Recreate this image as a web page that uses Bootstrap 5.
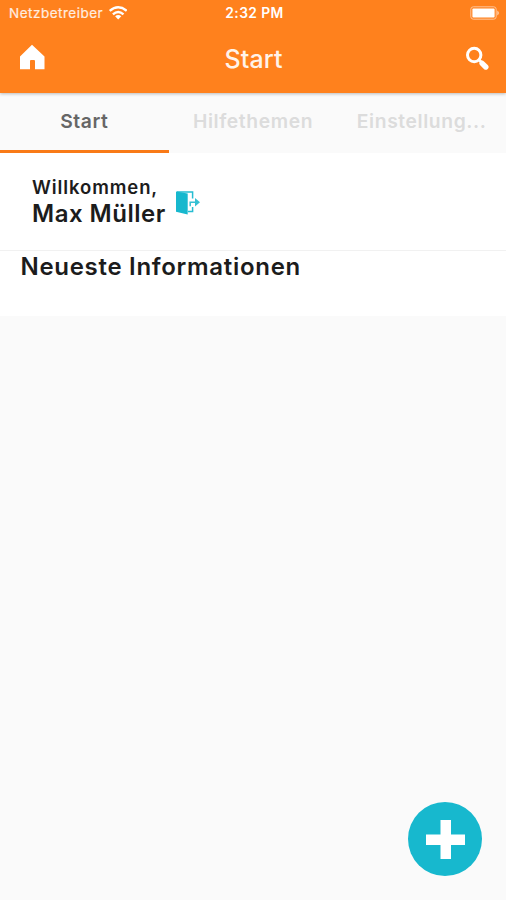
<!DOCTYPE html>
<html lang="de">
<head>
<meta charset="utf-8">
<meta name="viewport" content="width=device-width, initial-scale=1">
<title>Start</title>
<link href="https://cdn.jsdelivr.net/npm/bootstrap@5.3.0/dist/css/bootstrap.min.css" rel="stylesheet">
<style>
body{font-family:Inter,"Liberation Sans",sans-serif;background:#fafafa;color:#1c1c1c;height:900px;overflow:hidden}
svg{display:block}
.app-head{background:#ff811d;color:#fff;height:93px;box-shadow:0 1px 3px rgba(0,0,0,.25);z-index:1}
.status{height:26px;padding:0 6px 0 9px;font-size:13.5px;line-height:26px}
.status-time{font-weight:600;font-size:13.8px;letter-spacing:.4px}
.carrier{letter-spacing:.5px;color:#ffede0;-webkit-text-stroke:.2px #ffede0}
.title-bar{height:67px;padding:0 17px 3px 18px}
.title{font-size:25px;line-height:30px;padding-top:1px;font-weight:500;letter-spacing:.1px;color:#fff3ea}
.tabs{height:60px}
.tabs .nav-link{height:60px;padding:0;line-height:57px;font-size:19.3px;font-weight:600;letter-spacing:.6px;color:#dcdcdc;border-radius:0;border-bottom:3px solid transparent}
.tabs .nav-link.active{color:#666;border-bottom-color:#f97a17}
.welcome{height:98px;padding:22px 32px 0;border-bottom:1px solid #f1f1f1}
.greet{font-size:18.5px;line-height:25px;font-weight:600;letter-spacing:.9px}
.user{font-size:24px;line-height:28px;font-weight:600;letter-spacing:.5px}
.news{height:65px;padding:0 20.5px}
.news-title{font-size:24px;line-height:32px;font-weight:600;letter-spacing:.7px}
.fab{width:74px;height:74px;background:#17b8ce;right:24px;bottom:24px}
</style>
<script src="https://cdn.jsdelivr.net/npm/bootstrap@5.3.0/dist/js/bootstrap.bundle.min.js"></script>
</head>
<body class="d-flex flex-column">
<header class="app-head position-relative flex-shrink-0">
  <div class="status row g-0 align-items-center">
    <div class="col d-flex align-items-center">
      <span class="carrier">Netzbetreiber</span>
      <svg class="ms-1" width="20" height="15" viewBox="0 0 20 15" fill="none" stroke="#fff" stroke-width="2.4"><path d="M2.7 4.9Q11.2-2.2 19.7 4.9M5.9 8.3Q11.2 3.8 16.5 8.3"/><path d="M8.1 10.3Q11.2 7.9 14.3 10.3L11.2 13.6Z" fill="#fff" stroke="none"/></svg>
    </div>
    <div class="col-auto status-time">2:32 PM</div>
    <div class="col d-flex justify-content-end">
      <svg width="30" height="14" viewBox="0 0 30 14"><rect x=".8" y=".8" width="25.4" height="12.4" rx="2.5" fill="none" stroke="#ffc497"/><rect x="2.4" y="2.4" width="22.2" height="9.2" rx="1" fill="#fff"/><path d="M27.2 4.5Q31 7 27.2 9.5Z" fill="#ffc497"/></svg>
    </div>
  </div>
  <div class="title-bar row g-0 align-items-center">
    <a class="col" href="#" aria-label="Start"><svg width="28" height="28" viewBox="0 0 28 28" fill="#fff"><path d="M14 .7L26.5 12.5V25.3H17V17Q17 16 16 16H13Q12 16 12 17V25.3H2V12.5Z"/></svg></a>
    <h1 class="title col-auto m-0">Start</h1>
    <a class="col d-flex justify-content-end" href="#" aria-label="Suche"><svg width="24" height="24" viewBox="0 0 24 24" fill="none" stroke="#fff"><circle cx="9.2" cy="9" r="6.7" stroke-width="3"/><path d="M14 13.8L16.7 16.5" stroke-width="3"/><path d="M17.1 17.3L20.8 21" stroke-width="5.4" stroke-linecap="round"/></svg></a>
  </div>
</header>
<nav class="tabs nav nav-justified flex-nowrap flex-shrink-0">
  <a class="nav-link active" href="#">Start</a>
  <a class="nav-link" href="#">Hilfethemen</a>
  <a class="nav-link" href="#">Einstellung...</a>
</nav>
<main>
  <section class="welcome bg-white d-flex align-items-start">
    <div><div class="greet">Willkommen,</div><div class="user">Max Müller</div></div>
    <a class="ms-2 mt-3" href="#" aria-label="Abmelden"><svg width="26" height="24" viewBox="0 0 26 24"><path d="M3 1H18.6V7.4M18.6 16V20.6H14" fill="none" stroke="#25bdd2" stroke-width="1.5"/><path d="M2 .4L13.7 2.5V23.4L2 20.7Z" fill="#17b8ce"/><path d="M16.2 15.2V11.2H22" fill="none" stroke="#35c0d3" stroke-width="1.5"/><path d="M21 7L26 11.2L21 15.4Z" fill="#35c0d3"/></svg></a>
  </section>
  <section class="news bg-white"><h2 class="news-title m-0">Neueste Informationen</h2></section>
</main>
<a class="fab position-fixed rounded-circle d-flex align-items-center justify-content-center" href="#" aria-label="Hinzufügen"><svg width="41" height="41" viewBox="0 0 41 41"><path d="M15.5 1H26V15.5H40V26H26V40H15.5V26H1V15.5H15.5Z" fill="#fff"/></svg></a>
</body>
</html>
